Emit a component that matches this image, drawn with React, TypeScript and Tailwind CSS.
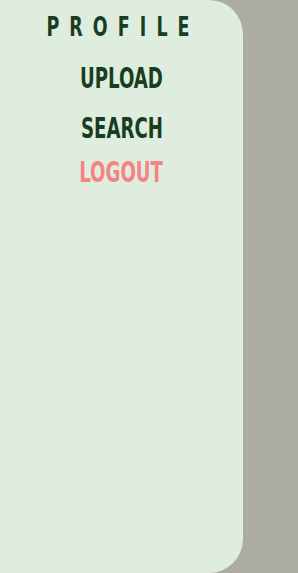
import React from 'react';

const font = { fontFamily: '"DejaVu Sans Condensed", "DejaVu Sans", sans-serif' };

const links = [
  { label: 'UPLOAD', cls: 'mt-[26px] text-[#183d22]' },
  { label: 'SEARCH', cls: 'mt-[24px] text-[#183d22]' },
  { label: 'LOGOUT', cls: 'mt-[18px] text-[#f58383]' },
];

const App = () => {
  return (
    <div className="flex h-[573px] w-[298px] bg-[#acaca2]" style={font}>
      <aside className="flex w-[243px] flex-col items-center rounded-r-[34px] bg-[#deeddd] pt-[14px]">
        <div className="scale-x-[0.72] pl-[3px] text-[27px] font-bold leading-[26px] tracking-[14px] text-[#183d22] [font-stretch:condensed]">
          PROFILE
        </div>
        {links.map((l) => (
          <a key={l.label} href="#" className={`scale-x-[0.72] text-[28px] font-bold leading-[26px] [font-stretch:condensed] ${l.cls}`}>
            {l.label}
          </a>
        ))}
      </aside>
    </div>
  );
};

export default App;
